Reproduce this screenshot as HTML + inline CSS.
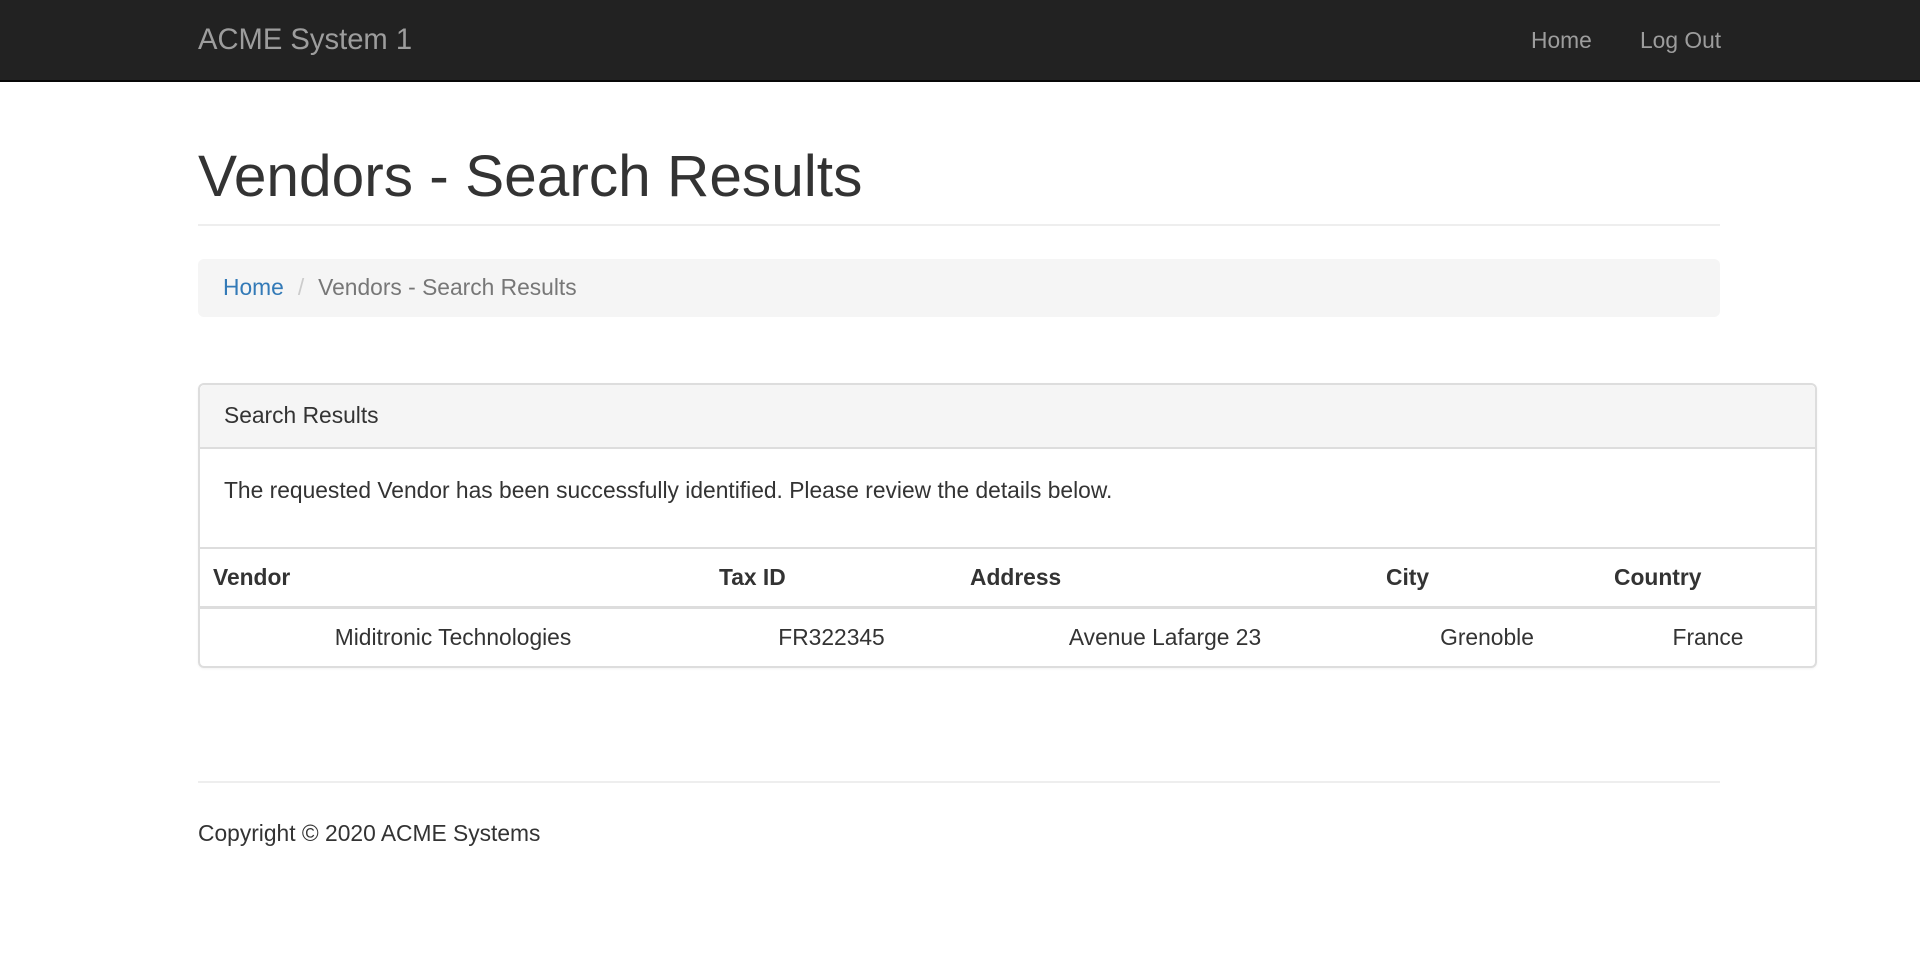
<!DOCTYPE html>
<html><head><meta charset="utf-8"><style>
*{margin:0;padding:0;box-sizing:border-box}
body{width:1920px;height:962px;background:#fff;font-family:"Liberation Sans",Arial,sans-serif;font-size:22.8px;color:#333;position:relative;overflow:hidden}
.a{position:absolute;white-space:nowrap}
.t{height:40px;line-height:40px}
</style></head><body>
<div class="a" style="left:0;top:0;width:1920px;height:82px;background:#222;border-bottom:2px solid #080808"></div>
<div class="a t" style="left:198px;top:20px;font-size:29.2px;color:#9d9d9d">ACME System 1</div>
<div class="a t" style="left:1531px;top:20px;color:#9d9d9d">Home</div>
<div class="a t" style="left:1640px;top:20px;color:#9d9d9d">Log Out</div>

<div class="a" style="left:198px;top:137px;height:80px;line-height:80px;font-size:58.6px;font-weight:500">Vendors - Search Results</div>
<div class="a" style="left:198px;top:224px;width:1522px;height:2px;background:#eee"></div>

<div class="a" style="left:198px;top:259px;width:1522px;height:58px;background:#f5f5f5;border-radius:6px"></div>
<div class="a t" style="left:223px;top:267px"><span style="color:#337ab7">Home</span><span style="color:#ccc;padding:0 14px">/</span><span style="color:#777">Vendors - Search Results</span></div>

<div class="a" style="left:198px;top:383px;width:1619px;height:285px;border:2px solid #ddd;border-radius:6px;box-shadow:0 1px 2px rgba(0,0,0,.05)"></div>
<div class="a" style="left:200px;top:385px;width:1615px;height:64px;background:#f5f5f5;border-bottom:2px solid #ddd;border-radius:5px 5px 0 0"></div>
<div class="a t" style="left:224px;top:395px">Search Results</div>
<div class="a t" style="left:224px;top:470px">The requested Vendor has been successfully identified. Please review the details below.</div>
<div class="a" style="left:200px;top:547px;width:1615px;height:2px;background:#ddd"></div>
<div class="a" style="left:200px;top:606px;width:1615px;height:3px;background:#ddd"></div>
<div class="a t" style="left:213px;top:557px;font-weight:bold">Vendor</div>
<div class="a t" style="left:719px;top:557px;font-weight:bold">Tax ID</div>
<div class="a t" style="left:970px;top:557px;font-weight:bold">Address</div>
<div class="a t" style="left:1386px;top:557px;font-weight:bold">City</div>
<div class="a t" style="left:1614px;top:557px;font-weight:bold">Country</div>
<div class="a t" style="left:200px;width:506px;text-align:center;top:617px">Miditronic Technologies</div>
<div class="a t" style="left:706px;width:251px;text-align:center;top:617px">FR322345</div>
<div class="a t" style="left:957px;width:416px;text-align:center;top:617px">Avenue Lafarge 23</div>
<div class="a t" style="left:1373px;width:228px;text-align:center;top:617px">Grenoble</div>
<div class="a t" style="left:1601px;width:214px;text-align:center;top:617px">France</div>

<div class="a" style="left:198px;top:781px;width:1522px;height:2px;background:#eee"></div>
<div class="a t" style="left:198px;top:813px">Copyright © 2020 ACME Systems</div>
</body></html>
